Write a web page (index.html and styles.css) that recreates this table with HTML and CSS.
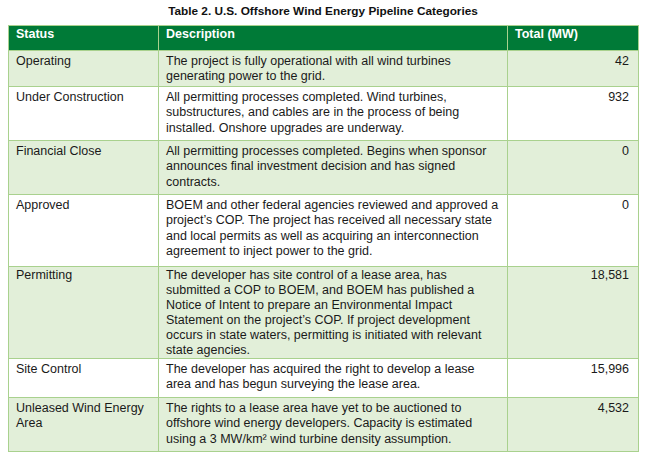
FILE: index.html
```html
<!DOCTYPE html>
<html lang="en">
<head>
<meta charset="utf-8">
<title>Table 2. U.S. Offshore Wind Energy Pipeline Categories</title>
<link rel="stylesheet" href="styles.css">
</head>
<body>
<div class="page">
  <h1 class="caption">Table 2. U.S. Offshore Wind Energy Pipeline Categories</h1>
  <table class="pipeline">
    <colgroup>
      <col class="c-status">
      <col class="c-desc">
      <col class="c-total">
    </colgroup>
    <thead>
      <tr class="head">
        <th>Status</th>
        <th>Description</th>
        <th>Total (MW)</th>
      </tr>
    </thead>
    <tbody>
      <tr class="alt r36">
        <td>Operating</td>
        <td>The project is fully operational with all wind turbines generating power to the grid.</td>
        <td class="num">42</td>
      </tr>
      <tr class="r54">
        <td>Under Construction</td>
        <td>All permitting processes completed. Wind turbines, substructures, and cables are in the process of being installed. Onshore upgrades are underway.</td>
        <td class="num">932</td>
      </tr>
      <tr class="alt r54">
        <td>Financial Close</td>
        <td>All permitting processes completed. Begins when sponsor announces final investment decision and has signed contracts.</td>
        <td class="num">0</td>
      </tr>
      <tr class="r72">
        <td>Approved</td>
        <td>BOEM and other federal agencies reviewed and approved a project’s COP. The project has received all necessary state and local permits as well as acquiring an interconnection agreement to inject power to the grid.</td>
        <td class="num">0</td>
      </tr>
      <tr class="alt r92">
        <td>Permitting</td>
        <td>The developer has site control of a lease area, has submitted a COP to BOEM, and BOEM has published a Notice of Intent to prepare an Environmental Impact Statement on the project’s COP. If project development occurs in state waters, permitting is initiated with relevant state agencies.</td>
        <td class="num">18,581</td>
      </tr>
      <tr class="r39">
        <td>Site Control</td>
        <td>The developer has acquired the right to develop a lease area and has begun surveying the lease area.</td>
        <td class="num">15,996</td>
      </tr>
      <tr class="alt r54">
        <td>Unleased Wind Energy Area</td>
        <td>The rights to a lease area have yet to be auctioned to offshore wind energy developers. Capacity is estimated using a 3 MW/km² wind turbine density assumption.</td>
        <td class="num">4,532</td>
      </tr>
    </tbody>
  </table>
</div>
</body>
</html>
```

FILE: styles.css
```css
* {
  box-sizing: border-box;
}

html, body {
  margin: 0;
  padding: 0;
  background: #ffffff;
}

body {
  font-family: "Liberation Sans", Arial, sans-serif;
  color: #1a1a1a;
}

.page {
  padding: 4px 0 0 8px;
  width: 646px;
}

.caption {
  margin: 0;
  width: 630px;
  text-align: center;
  font-size: 11.8px;
  font-weight: bold;
  line-height: 14px;
  color: #111111;
}

.pipeline {
  margin-top: 7px;
  width: 630px;
  border-collapse: collapse;
  table-layout: fixed;
  font-size: 12.5px;
  line-height: 15.3px;
}

.c-status { width: 150px; }
.c-desc { width: 349px; }
.c-total { width: 131px; }

.pipeline th,
.pipeline td {
  border: 1px solid #a9d18e;
  vertical-align: top;
  text-align: left;
  padding: 3px 7px 0 7px;
}

.pipeline th {
  background: #007a37;
  color: #ffffff;
  font-weight: bold;
  padding-top: 1px;
  height: 25px;
}

.pipeline td.num {
  text-align: right;
  padding-right: 9px;
}

.alt td {
  background: #e2efd9;
}

.r36 { height: 36px; }
.r39 { height: 39px; }
.r54 { height: 54px; }
.r72 { height: 72px; }
.r92 { height: 92px; }

.r92 td {
  padding-top: 1px;
  line-height: 15px;
}
```
